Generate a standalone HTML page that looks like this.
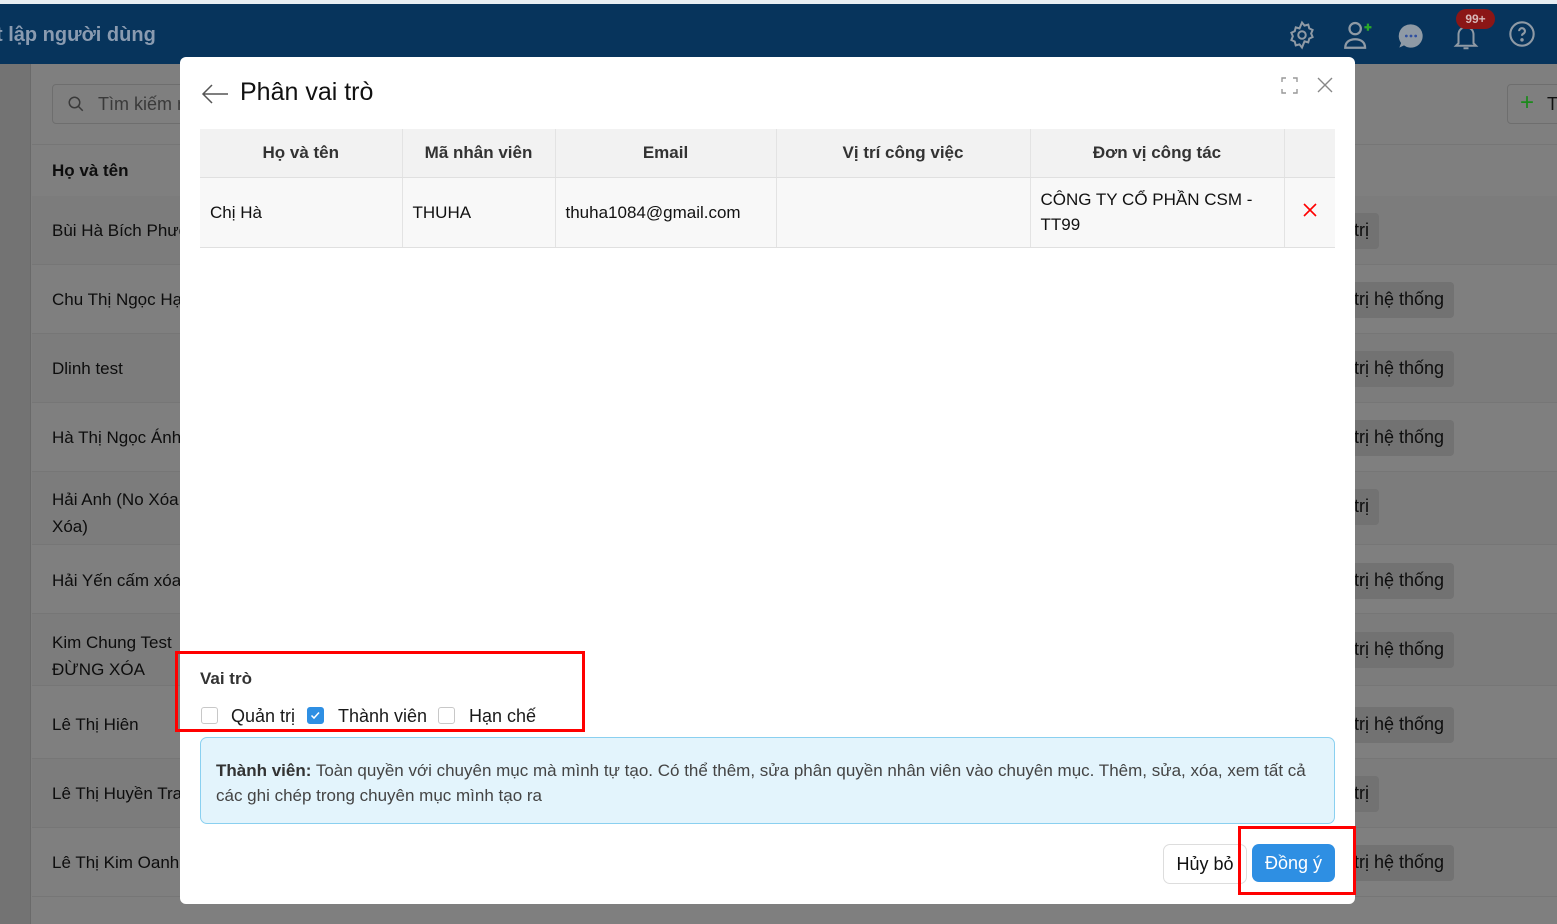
<!DOCTYPE html>
<html><head><meta charset="utf-8"><style>
*{box-sizing:border-box;margin:0;padding:0}
body{width:1557px;height:924px;overflow:hidden;font-family:"Liberation Sans",Roboto,sans-serif;background:#7f7f7f;position:relative;color:#1a1a1a}
.top{position:absolute;left:0;top:0;width:1557px;height:4px;background:#e8eef3}
.hdr{position:absolute;left:0;top:4px;width:1557px;height:60px;background:#07345c}
.hdr .t{position:absolute;left:-4px;top:20px;color:#8a9bb0;font-size:20px;font-weight:bold}
.side{position:absolute;left:0;top:64px;width:31px;height:860px;background:#737373;border-right:1px solid #6a6a6a}
.abs{position:absolute}
.row{position:absolute;left:32px;width:1525px;border-bottom:1px solid #767676}
.name{position:absolute;left:52px;font-size:17px;color:#0d0d0d}
.tag{position:absolute;left:1340px;height:36px;background:#727272;border-radius:4px;font-size:18px;color:#0d0d0d;padding:7px 10px 0 14px}
.modal{position:absolute;left:180px;top:57px;width:1175px;height:847px;background:#fff;border-radius:6px}
table{position:absolute;left:20px;top:72px;width:1135px;border-collapse:collapse;font-size:17px}
th{background:#f2f2f2;height:48px;font-weight:bold;color:#333;border-right:1px solid #e3e3e3;border-bottom:1px solid #e0e0e0}
td{background:#f8f8f8;height:70px;padding:0 10px;border-right:1px solid #e3e3e3;border-bottom:1px solid #e0e0e0;color:#111;line-height:25px}
.cb{position:absolute;width:17px;height:17px;border:1px solid #c8c8c8;border-radius:3px;background:#fff}
.red{position:absolute;border:3px solid #f00}
</style></head><body>
<div class="top"></div>
<div class="hdr"><div class="t">t lập người dùng</div>
<svg class="abs" style="left:1287px;top:16px" width="30" height="30" viewBox="0 0 24 24" fill="none" stroke="#8f9aa5" stroke-width="1.6"><circle cx="12" cy="12" r="3"/><path d="M12 2l2 2.5 3-.8.8 3 2.7 1.3-1.2 2.8 1.2 2.8-2.7 1.3-.8 3-3-.8L12 22l-2-2.5-3 .8-.8-3-2.7-1.3L4.7 13 3.5 10.2l2.7-1.3.8-3 3 .8z"/></svg>
<svg class="abs" style="left:1341px;top:14px" width="34" height="34" viewBox="0 0 24 24" fill="none" stroke="#8f9aa5" stroke-width="1.6"><circle cx="10" cy="7.5" r="4"/><path d="M3 21c0-4 3-6 7-6s7 2 7 6z"/><path d="M19 4v5M16.5 6.5h5" stroke="#2aa82a"/></svg>
<svg class="abs" style="left:1397px;top:18px" width="28" height="28" viewBox="0 0 24 24"><path d="M12 2a10 10 0 1 1-6 18l-4 2 1.5-4A10 10 0 0 1 12 2z" fill="#8f9aa5"/><circle cx="8" cy="12" r="1.2" fill="#3050a0"/><circle cx="12" cy="12" r="1.2" fill="#3050a0"/><circle cx="16" cy="12" r="1.2" fill="#3050a0"/></svg>
<svg class="abs" style="left:1451px;top:18px" width="30" height="30" viewBox="0 0 24 24" fill="none" stroke="#8f9aa5" stroke-width="1.6"><path d="M6 17V10a6 6 0 0 1 12 0v7l2 2H4z"/><path d="M10 21h4"/></svg>
<div class="abs" style="left:1456px;top:5px;width:39px;height:20px;background:#8b1616;border-radius:10px;color:#d8b8b8;font-size:12px;font-weight:bold;text-align:center;line-height:20px">99+</div>
<svg class="abs" style="left:1508px;top:16px" width="28" height="28" viewBox="0 0 24 24" fill="none" stroke="#8f9aa5" stroke-width="1.8"><circle cx="12" cy="12" r="10"/><path d="M9.5 9.5a2.5 2.5 0 1 1 3.5 2.3c-.7.4-1 .9-1 1.7"/><circle cx="12" cy="17" r=".6" fill="#8f9aa5"/></svg>
</div>
<div class="side"></div>
<div class="abs" style="left:52px;top:84px;width:140px;height:40px;border:1px solid #6e6e6e;border-radius:4px"></div>
<svg class="abs" style="left:67px;top:95px" width="18" height="18" viewBox="0 0 24 24" fill="none" stroke="#3a3a3a" stroke-width="2"><circle cx="10" cy="10" r="7"/><path d="M15 15l6 6"/></svg>
<div class="abs" style="left:98px;top:94px;font-size:18px;color:#3a3a3a">Tìm kiếm n</div>
<div class="abs" style="left:1507px;top:84px;width:60px;height:40px;border:1px solid #6e6e6e;border-radius:4px"></div>
<div class="abs" style="left:1520px;top:89px;font-size:24px;color:#1c8a1c">+</div>
<div class="abs" style="left:1547px;top:94px;font-size:18px;color:#111">T</div>
<div class="row" style="top:144px;height:1px;background:#767676"></div>
<div class="name" style="top:161px;font-weight:bold">Họ và tên</div>
<div class="row" style="top:196px;height:69px;background:#7c7c7c"></div>
<div class="row" style="top:265px;height:69px"></div>
<div class="row" style="top:334px;height:69px;background:#7c7c7c"></div>
<div class="row" style="top:403px;height:69px"></div>
<div class="row" style="top:472px;height:73px;background:#7c7c7c"></div>
<div class="row" style="top:545px;height:69px"></div>
<div class="row" style="top:614px;height:72px;background:#7c7c7c"></div>
<div class="row" style="top:686px;height:73px"></div>
<div class="row" style="top:759px;height:69px;background:#7c7c7c"></div>
<div class="row" style="top:828px;height:69px"></div>
<div class="name" style="top:221px">Bùi Hà Bích Phươ</div>
<div class="name" style="top:290px">Chu Thị Ngọc Hạ</div>
<div class="name" style="top:359px">Dlinh test</div>
<div class="name" style="top:428px">Hà Thị Ngọc Ánh</div>
<div class="name" style="top:486px;line-height:27px">Hải Anh (No Xóa<br>Xóa)</div>
<div class="name" style="top:571px">Hải Yến cấm xóa</div>
<div class="name" style="top:629px;line-height:27px">Kim Chung Test<br>ĐỪNG XÓA</div>
<div class="name" style="top:715px">Lê Thị Hiên</div>
<div class="name" style="top:784px">Lê Thị Huyền Tra</div>
<div class="name" style="top:853px">Lê Thị Kim Oanh</div>
<div class="tag" style="top:213px">trị</div>
<div class="tag" style="top:282px">trị hệ thống</div>
<div class="tag" style="top:351px">trị hệ thống</div>
<div class="tag" style="top:420px">trị hệ thống</div>
<div class="tag" style="top:489px">trị</div>
<div class="tag" style="top:563px">trị hệ thống</div>
<div class="tag" style="top:632px">trị hệ thống</div>
<div class="tag" style="top:707px">trị hệ thống</div>
<div class="tag" style="top:776px">trị</div>
<div class="tag" style="top:845px">trị hệ thống</div>

<div class="modal">
<svg class="abs" style="left:20px;top:26px" width="30" height="22" viewBox="0 0 30 22" fill="none" stroke="#555" stroke-width="1.5"><path d="M28 11H3M12 2l-9 9 9 9"/></svg>
<div class="abs" style="left:60px;top:21px;font-size:25px;color:#111">Phân vai trò</div>
<svg class="abs" style="left:1101px;top:20px" width="17" height="17" viewBox="0 0 17 17" fill="none" stroke="#999" stroke-width="1.4"><path d="M1 5V1h4M12 1h4v4M16 12v4h-4M5 16H1v-4"/></svg>
<svg class="abs" style="left:1137px;top:20px" width="16" height="16" viewBox="0 0 16 16" stroke="#888" stroke-width="1.4"><path d="M1 1l14 14M15 1L1 15"/></svg>
<table>
<tr><th style="width:202px">Họ và tên</th><th style="width:153px">Mã nhân viên</th><th style="width:221px">Email</th><th style="width:254px">Vị trí công việc</th><th style="width:254px">Đơn vị công tác</th><th style="border-right:none"></th></tr>
<tr><td>Chị Hà</td><td>THUHA</td><td>thuha1084@gmail.com</td><td></td><td>CÔNG TY CỔ PHẦN CSM -<br>TT99</td><td style="border-right:none;text-align:center"><svg width="16" height="16" viewBox="0 0 16 16" stroke="#f00" stroke-width="1.6"><path d="M2 2l12 12M14 2L2 14"/></svg></td></tr>
</table>
<div class="abs" style="left:20px;top:612px;font-size:17px;font-weight:bold;color:#333">Vai trò</div>
<div class="cb" style="left:21px;top:650px"></div>
<div class="abs" style="left:51px;top:649px;font-size:18px">Quản trị</div>
<div class="cb" style="left:127px;top:650px;background:#2e8fe3;border-color:#2e8fe3"><svg width="15" height="15" viewBox="0 0 15 15" fill="none" stroke="#fff" stroke-width="1.5"><path d="M3.5 7.5l2.5 2.5 5-5.5"/></svg></div>
<div class="abs" style="left:158px;top:649px;font-size:18px">Thành viên</div>
<div class="cb" style="left:258px;top:650px"></div>
<div class="abs" style="left:289px;top:649px;font-size:18px">Hạn chế</div>
<div class="abs" style="left:20px;top:680px;width:1135px;height:87px;background:#e3f4fc;border:1px solid #8ad0f0;border-radius:7px;padding:20px 15px;font-size:17px;line-height:25px;color:#444"><b style="color:#333">Thành viên:</b> Toàn quyền với chuyên mục mà mình tự tạo. Có thể thêm, sửa phân quyền nhân viên vào chuyên mục. Thêm, sửa, xóa, xem tất cả các ghi chép trong chuyên mục mình tạo ra</div>
<div class="abs" style="left:983px;top:787px;width:84px;height:40px;border:1px solid #ddd;border-radius:7px;font-size:18px;text-align:center;line-height:38px;color:#111">Hủy bỏ</div>
<div class="abs" style="left:1072px;top:787px;width:83px;height:38px;background:#2e8fe3;border-radius:7px;font-size:18px;text-align:center;line-height:38px;color:#fff">Đồng ý</div>
</div>
<div class="red" style="left:175px;top:651px;width:410px;height:81px"></div>
<div class="red" style="left:1238px;top:826px;width:118px;height:69px"></div>
</body></html>
